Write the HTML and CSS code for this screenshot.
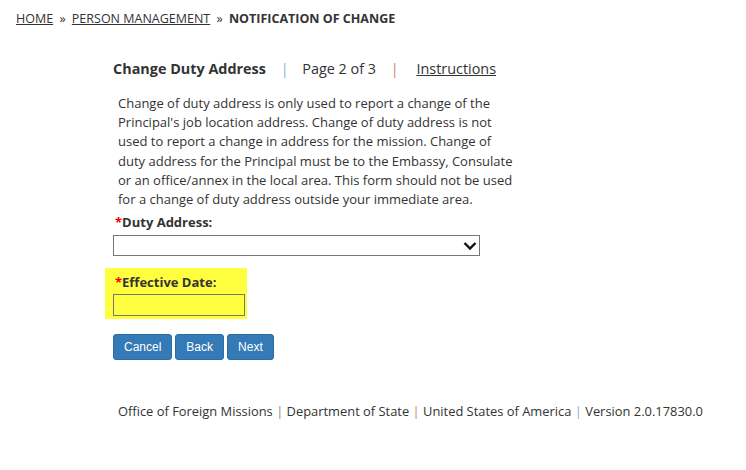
FILE: index.html
```html
<!DOCTYPE html>
<html lang="en">
<head>
    <meta charset="UTF-8">
    <title>Notification of Change</title>
    <link rel="stylesheet" href="styles.css">
</head>
<body>
    <div class="breadcrumb">
        <a href="#">HOME</a>
        <span class="sep">&raquo;</span>
        <a href="#">PERSON MANAGEMENT</a>
        <span class="sep">&raquo;</span>
        <b>NOTIFICATION OF CHANGE</b>
    </div>

    <div class="content">
        <div class="page-head">
            <span class="title">Change Duty Address</span>
            <span class="bar blue">|</span>
            <span class="page-no">Page 2 of 3</span>
            <span class="bar red">|</span>
            <a href="#" class="instr">Instructions</a>
        </div>

        <p class="intro">Change of duty address is only used to report a change of the Principal's job location address. Change of duty address is not used to report a change in address for the mission. Change of duty address for the Principal must be to the Embassy, Consulate or an office/annex in the local area. This form should not be used for a change of duty address outside your immediate area.</p>

        <form>
            <label class="field-label"><span class="req">*</span>Duty Address:</label>
            <div class="select-box">
                <select></select>
                <svg class="caret" width="14" height="10" viewBox="0 0 14 10"><path d="M1.5 2 L7 7.5 L12.5 2" fill="none" stroke="#111" stroke-width="2.4"/></svg>
            </div>

            <div class="highlight">
                <label class="field-label"><span class="req">*</span>Effective Date:</label>
                <input type="text" class="date-input">
            </div>

            <div class="buttons">
                <button type="button">Cancel</button>
                <button type="button">Back</button>
                <button type="button">Next</button>
            </div>
        </form>
    </div>

    <div class="footer">
        Office of Foreign Missions <span class="grey">|</span> Department of State <span class="red">|</span> United States of America <span class="blue">|</span> Version 2.0.17830.0
    </div>
</body>
</html>
```

FILE: styles.css
```css
body {
    font-family: "Open Sans", "Noto Sans", sans-serif;
    font-size: 13px;
    color: #333;
    background-color: #fff;
    margin: 0;
    padding: 11px 16px;
}

a {
    color: #333;
}

.breadcrumb {
    font-size: 12.5px;
    line-height: 16px;
}

.breadcrumb .sep {
    margin: 0 3px;
}

.content {
    margin-left: 97px;
    width: 410px;
    padding-top: 33px;
}

.page-head {
    font-size: 14.4px;
    line-height: 18px;
}

.page-head .title {
    font-weight: bold;
}

.bar {
    margin: 0 10px 0 11px;
}

.instr {
    margin-left: 4px;
}

.blue {
    color: #7fb3e0;
}

.red {
    color: #d08070;
}

.grey {
    color: #888;
}

.intro {
    margin: 16px 0 0 5px;
    line-height: 19.2px;
    width: 400px;
}

.field-label {
    display: block;
    font-weight: bold;
    margin: 2px 0 5px 2px;
    line-height: 16px;
}

.intro + form > .field-label {
    margin-top: 5px;
}

.req {
    color: #e00;
}

.select-box {
    position: relative;
    width: 367px;
    height: 21px;
}

.select-box select {
    width: 100%;
    height: 21px;
    border: 1px solid #777;
    background: #fff;
    appearance: none;
    margin: 0;
}

.select-box .caret {
    position: absolute;
    right: 3px;
    top: 6px;
}

.highlight {
    background-color: #ffff40;
    width: 126px;
    margin: 12px 0 0 -8px;
    padding: 4px 8px 3px 8px;
}

.highlight .field-label {
    margin-bottom: 4px;
}

.date-input {
    width: 132px;
    height: 22px;
    box-sizing: border-box;
    border: 1px solid #777;
    background: #ffff40;
    margin: 0;
    display: block;
}

.buttons {
    margin-top: 15px;
    display: flex;
    gap: 3px;
}

button {
    font-family: "Liberation Sans", Arial, sans-serif;
    font-size: 12px;
    background-color: #337ab7;
    border: 1px solid #2e6da4;
    color: #fff;
    border-radius: 3px;
    height: 26px;
    padding: 0 10px;
}

.footer {
    margin: 42px 0 0 102px;
    font-size: 12.9px;
}
```
